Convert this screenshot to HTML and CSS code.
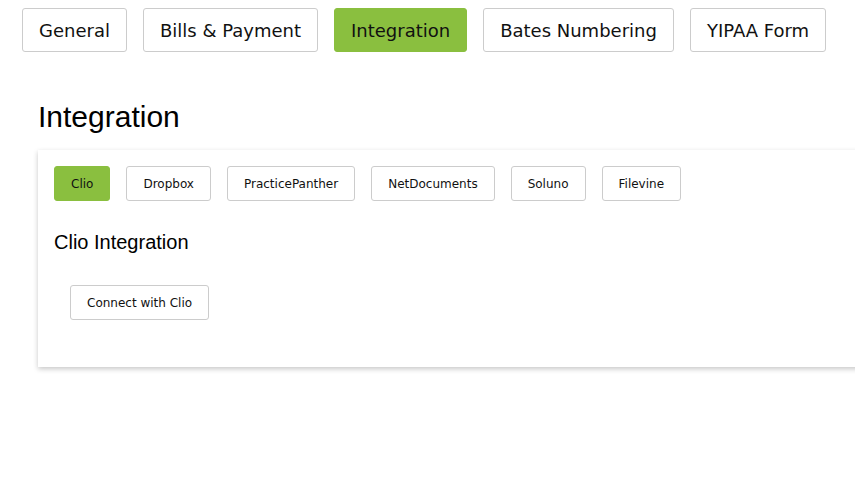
FILE: index.html
```html
<!DOCTYPE html>
<html>
<head>
<title>Settings - Integration</title>
<meta charset="UTF-8">
<link rel="stylesheet" href="styles.css">
</head>
<body>
  <div class="tabs">
    <button class="tab">General</button>
    <button class="tab">Bills &amp; Payment</button>
    <button class="tab active">Integration</button>
    <button class="tab">Bates Numbering</button>
    <button class="tab">YIPAA Form</button>
  </div>

  <div class="section">
    <h1>Integration</h1>
    <div class="card">
      <div class="sub-tabs">
        <button class="sub-tab active">Clio</button>
        <button class="sub-tab">Dropbox</button>
        <button class="sub-tab">PracticePanther</button>
        <button class="sub-tab">NetDocuments</button>
        <button class="sub-tab">Soluno</button>
        <button class="sub-tab">Filevine</button>
      </div>
      <h2>Clio Integration</h2>
      <div class="connect">
        <button class="sub-tab">Connect with Clio</button>
      </div>
    </div>
  </div>
</body>
</html>
```

FILE: styles.css
```css
body {
  margin: 0;
  padding-top: 8px;
  font-family: "Liberation Sans", Arial, sans-serif;
  background: #fff;
  color: #000;
}
.tabs {
  display: flex;
  gap: 16px;
  padding-left: 22px;
}
.tab {
  height: 44px;
  padding: 0 16px;
  background: #fff;
  border: 1px solid #ccc;
  border-radius: 3px;
  font-family: "DejaVu Sans", Verdana, sans-serif;
  font-size: 18px;
  color: #111;
  cursor: pointer;
}
.tab.active,
.sub-tab.active {
  background: #8abf3f;
  border-color: #8abf3f;
}
/* the card runs off the right edge, so clip it here */
.section {
  padding: 0 0 12px 38px;
  overflow: hidden;
}
h1 {
  font-size: 30px;
  font-weight: normal;
  margin: 48px 0 16px;
}
.card {
  width: 900px;
  padding: 16px 16px 47px;
  background: #fff;
  box-shadow: 0 2px 5px rgba(0, 0, 0, 0.22);
}
.sub-tabs {
  display: flex;
  gap: 16px;
}
.sub-tab {
  height: 35px;
  padding: 0 16px;
  background: #fff;
  border: 1px solid #ccc;
  border-radius: 3px;
  font-family: "DejaVu Sans", Verdana, sans-serif;
  font-size: 12px;
  color: #111;
  cursor: pointer;
}
h2 {
  font-size: 20px;
  font-weight: normal;
  margin: 30px 0 31px;
}
.connect {
  padding-left: 16px;
}
```
